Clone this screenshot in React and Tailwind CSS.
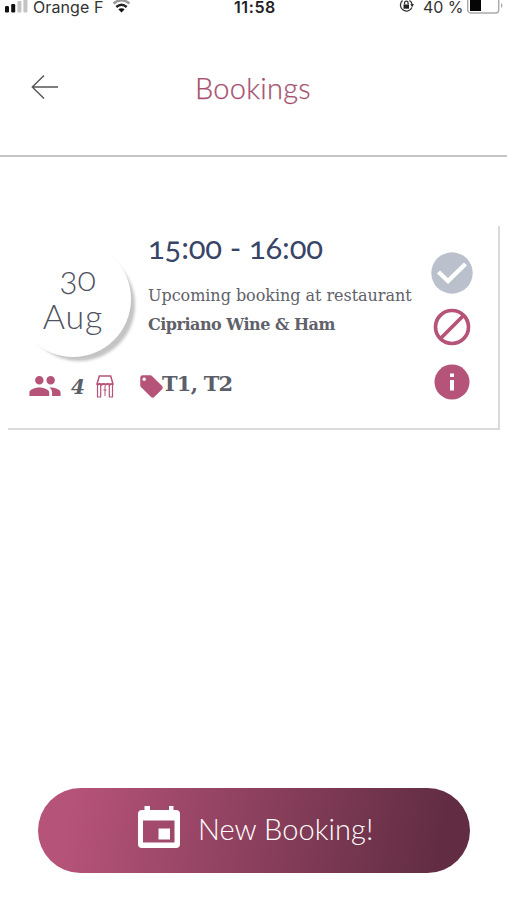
import { MdGroup, MdLocalOffer } from "react-icons/md";

function StatusBar() {
  return (
    <div className="flex h-[14px] w-full items-start font-['Inter',sans-serif] text-[16px] leading-[14px] text-[#333]">
      <svg className="ml-[5px] shrink-0" width="23" height="14" viewBox="0 0 23 14">
        <rect x="0" y="6" width="4" height="6.5" rx="1.2" fill="#111" />
        <rect x="6.2" y="4" width="4" height="8.5" rx="1.2" fill="#111" />
        <rect x="12.4" y="1" width="4" height="11.5" rx="1" fill="#c4c4c4" />
        <rect x="18.4" y="-2" width="4" height="14.5" rx="1" fill="#c4c4c4" />
      </svg>
      <span className="ml-[5px] w-[79px] whitespace-nowrap tracking-[0.1px]">Orange F</span>
      <svg className="shrink-0" width="19" height="14" viewBox="0 0 19 14" fill="none" stroke="#222" strokeWidth="2.4">
        <path d="M1.5 3.5Q9.5 -3 17.5 3.5" stroke="#999" />
        <path d="M4.3 7Q9.5 2.5 14.7 7" />
        <path d="M6.3 9.3Q9.5 7 12.7 9.3L9.5 12.5Z" fill="#111" stroke="none" />
      </svg>
      <span className="ml-[103px] w-[165px] font-semibold tracking-[0.6px] text-[#222]">11:58</span>
      <svg className="shrink-0" width="15" height="14" viewBox="0 0 15 14" fill="none" stroke="#333" strokeWidth="1.3">
        <path d="M3.5 0.5A6 6 0 1 0 12.9 7.5M10.5 0.500A6 6 0 0 1 13.3 5" />
        <rect x="4.5" y="4.5" width="5.5" height="4.2" fill="#222" stroke="none" />
        <path d="M5.5 4.5V3a1.8 1.8 0 0 1 3.6 0v1.5" />
        <path d="M11.3 4.2h3.7l-1.9 3z" fill="#222" stroke="none" />
      </svg>
      <span className="ml-[9px] w-[44px] whitespace-nowrap tracking-[-0.1px]">40 %</span>
      <svg className="shrink-0" width="38" height="14" viewBox="0 0 38 14">
        <rect x="0.7" y="-5" width="31" height="18" rx="3" fill="#fff" stroke="#aaa" strokeWidth="1.4" />
        <rect x="3" y="-4" width="11" height="15" fill="#050505" />
        <path d="M34 3q3 2.5 0 5z" fill="#aaa" />
      </svg>
    </div>
  );
}

function Header() {
  return (
    <header className="flex h-[157px] flex-col border-b-2 border-[#c5c5c5]">
      <StatusBar />
      <div className="mt-[48px] flex h-[52px] items-center">
        <button type="button" aria-label="Back" className="ml-[31px] w-[164px]">
          <svg className="mt-[-2px]" width="28" height="26" viewBox="0 0 28 26" fill="none" stroke="#555" strokeWidth="1.4">
            <path d="M13 1.5L1.3 13L13 24.5M1.3 13H27" />
          </svg>
        </button>
        <h1 className="mt-[-2px] whitespace-nowrap font-['Lato',sans-serif] text-[29px] font-light leading-none tracking-[0.25px] text-[#a64f70] [-webkit-text-stroke:0.25px_#a64f70]">
          Bookings
        </h1>
      </div>
    </header>
  );
}

function DateCircle() {
  return (
    <div className="ml-[7px] mt-[15px] flex h-[116px] w-[116px] flex-col items-center rounded-full bg-white pt-[18px] font-['Lato',sans-serif] text-[34px] font-light leading-[38px] text-[#50535f] shadow-[6px_6px_3px_-2px_#c4c4c4]">
      <span className="pl-[9px] oldstyle-nums">30</span>
      <span className="tracking-[0.8px]">Aug</span>
    </div>
  );
}

function StoolIcon() {
  return (
    <svg width="18" height="23" viewBox="0 0 18 23" fill="none" stroke="#b65378" strokeWidth="1.5">
      <path d="M3.3 1H14.7L17 9H1Z" />
      <path d="M1.5 10.3L3.5 8.5L5.5 10.3L7.5 8.5L9.5 10.3L11.5 8.5L13.5 10.3L16.5 8.5" strokeWidth="1.2" />
      <path d="M1.5 9V22M4.7 10V22M13.3 10V22M16.5 9V22M1 22H5M13 22H17" strokeWidth="1.2" />
      <path d="M9 11V21M7.5 15H10.5" strokeWidth="1" />
    </svg>
  );
}

function Actions() {
  return (
    <div className="flex w-[42px] shrink-0 flex-col items-center pt-[26px]">
      <button type="button" aria-label="Confirm">
        <svg className="block" width="42" height="42" viewBox="0 0 42 42" fill="none">
          <circle cx="21" cy="21" r="20.7" fill="#bac1cc" />
          <path d="M7.5 20L17 29L34.5 12" stroke="#fff" strokeWidth="4.4" />
        </svg>
      </button>
      <button type="button" aria-label="Cancel" className="mt-[14px]">
        <svg className="block" width="38" height="38" viewBox="0 0 38 38" fill="none" stroke="#b65378" strokeWidth="3.7">
          <circle cx="19" cy="19" r="16.5" />
          <path d="M7.5 30.5L30.5 7.5" />
        </svg>
      </button>
      <button type="button" aria-label="Info" className="mt-[18px]">
        <svg className="block" width="36" height="36" viewBox="0 0 36 36">
          <circle cx="18" cy="18" r="17.5" fill="#b65378" />
          <path d="M16 9.5h4v3.5h-4zM16 16h4v10.500h-4z" fill="#fff" />
        </svg>
      </button>
    </div>
  );
}

function BookingCard() {
  return (
    <section className="ml-2 mt-[69px] flex h-[204px] w-[492px] border-b-2 border-r-2 border-[#dadada]">
      <div className="flex w-[423px] flex-col">
        <div className="flex h-[143px]">
          <DateCircle />
          <div className="ml-[17px] font-['DejaVu_Serif',serif] text-[#606169]">
            <p className="mt-[3px] whitespace-nowrap font-['Lato',sans-serif] text-[31px] leading-[36px] tracking-[-0.15px] text-[#384566] oldstyle-nums">
              15:00 - 16:00
            </p>
            <p className="mt-[21px] whitespace-nowrap text-[16px] leading-[20px] tracking-[-0.04px]">
              Upcoming booking at restaurant
            </p>
            <p className="mt-[9px] whitespace-nowrap text-[16px] font-bold leading-[20px] tracking-[-0.5px]">
              Cipriano Wine &amp; Ham
            </p>
          </div>
        </div>
        <div className="flex h-[34px] items-center font-['DejaVu_Serif',serif] font-bold text-[#5b5e68]">
          <MdGroup className="ml-[20px] h-[34px] w-[34px] text-[#b65378]" />
          <span className="ml-[9px] mt-[2px] w-[25px] text-[20px] italic leading-none">4</span>
          <StoolIcon />
          <MdLocalOffer className="ml-[24px] h-[27px] w-[27px] text-[#b65378]" />
          <span className="ml-[-3px] mt-[-6px] whitespace-nowrap text-[21px] leading-none tracking-[-0.8px]">T1, T2</span>
        </div>
      </div>
      <Actions />
    </section>
  );
}

function NewBookingButton() {
  return (
    <button
      type="button"
      className="ml-[38px] mt-[358px] flex h-[85px] w-[432px] items-center rounded-full bg-[linear-gradient(100deg,#b65378_8%,#622d43_92%)] text-white"
    >
      <svg className="ml-[100px] mt-[-7px] shrink-0" width="42" height="42" viewBox="0 0 42 42" fill="#fff">
        <path
          fillRule="evenodd"
          d="M6.5 0H12V4H31V0H35.5V4H38Q42 4 42 8V38Q42 42 38 42H4Q0 42 0 38V8Q0 4 4 4H6.5ZM5 14.5V36.5H36.5V14.5Z"
        />
        <path d="M20.5 22.5H32V33.5H20.5Z" />
      </svg>
      <span className="ml-[18px] mt-[-5px] whitespace-nowrap font-['Lato',sans-serif] text-[29px] font-light leading-none tracking-[0.05px]">
        New Booking!
      </span>
    </button>
  );
}

export default function App() {
  return (
    <main className="h-[900px] w-[507px] bg-white">
      <Header />
      <BookingCard />
      <NewBookingButton />
    </main>
  );
}
